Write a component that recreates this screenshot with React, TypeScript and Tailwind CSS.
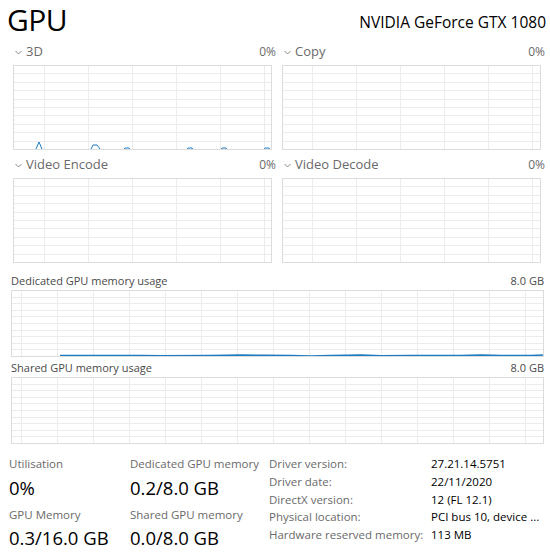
import React from "react";

const BLUE = "#1b7bc4";
const GRID = "#ececec";
const EDGE = "#dcdcdc";

type ChartProps = {
  width: number;
  height: number;
  colStart: number;
  colStep: number;
  rows: number;
  line?: string;
  lineWidth?: number;
};

function Chart({ width, height, colStart, colStep, rows, line, lineWidth = 1 }: ChartProps) {
  const cols: number[] = [];
  for (let x = colStart; x < width - 1; x += colStep) cols.push(Math.round(x) + 0.5);
  const rowLines: number[] = [];
  const step = (height - 1) / rows;
  for (let i = 1; i < rows; i++) rowLines.push(Math.round(i * step) + 0.5);

  return (
    <svg width={width} height={height} className="block overflow-hidden">
      {cols.map((x) => (
        <line key={"c" + x} x1={x} x2={x} y1={0} y2={height} stroke={GRID} />
      ))}
      {rowLines.map((y) => (
        <line key={"r" + y} x1={0} x2={width} y1={y} y2={y} stroke={GRID} />
      ))}
      {line && (
        <polyline points={line} fill="none" stroke={BLUE} strokeWidth={lineWidth} strokeLinejoin="round" />
      )}
      <rect x={0.5} y={0.5} width={width - 1} height={height - 1} fill="none" stroke={EDGE} />
    </svg>
  );
}

function Chevron() {
  return (
    <svg width="7" height="5" viewBox="0 0 7 5" className="block">
      <polyline points="0.5,1 3.5,4 6.5,1" fill="none" stroke="#8a8a8a" strokeWidth="1" />
    </svg>
  );
}

type PanelProps = {
  label: string;
  pct: string;
  line?: string;
  colStart: number;
};

function EnginePanel({ label, pct, line, colStart }: PanelProps) {
  return (
    <div className="flex flex-col w-[263px]">
      <div className="flex items-center justify-between h-[24px] text-[13px] text-[#6a6a6a]">
        <div className="flex items-center gap-[4px] pl-[2px]">
          <Chevron />
          <span>{label}</span>
        </div>
        <span className="text-[12px]">{pct}</span>
      </div>
      <div className="mt-[1px]">
        <Chart width={259} height={85} colStart={colStart} colStep={44} rows={10} line={line} />
      </div>
    </div>
  );
}

const line3d =
  "0,86 22,86 23,84 26,77 29,84 30,86 77,86 78,84 80,80 84,80 87,84 88,86 " +
  "110,86 112,83 116,83 118,86 173,86 175,83 179,83 181,86 207,86 209,83 213,83 215,86 " +
  "250,86 252,83 256,83 258,86";

const lineMem =
  "49,65.5 120,65.5 130,65.5 150,65.7 200,65.5 230,65 250,65.3 280,65.5 " +
  "300,66 320,65.5 350,65 370,65.8 400,65.5 450,65.5 470,65 490,65.5 520,65.5 535,65 545,65";

export default function App() {
  return (
    <div
      className="w-[550px] h-[555px] bg-white overflow-hidden text-black"
      style={{ fontFamily: '"Open Sans", "Noto Sans", sans-serif' }}
    >
      <div className="flex items-end justify-between h-[40px] pl-[7px] pr-[4px]">
        <div className="text-[30px] leading-[40px] tracking-[-0.5px]">GPU</div>
        <div className="text-[15.5px] leading-[20px] mb-[8px]">NVIDIA GeForce GTX 1080</div>
      </div>

      <div className="flex gap-[6px] pl-[13px]">
        <EnginePanel label="3D" pct="0%" line={line3d} colStart={31} />
        <EnginePanel label="Copy" pct="0%" colStart={30} />
      </div>
      <div className="flex gap-[6px] pl-[13px] mt-[3px]">
        <EnginePanel label="Video Encode" pct="0%" colStart={31} />
        <EnginePanel label="Video Decode" pct="0%" colStart={30} />
      </div>

      <div className="pl-[11px] pr-[6px] mt-[9px] text-[11px] text-[#4a4a4a]">
        <div className="flex items-center justify-between h-[18px]">
          <span>Dedicated GPU memory usage</span>
          <span>8.0 GB</span>
        </div>
        <Chart width={533} height={67} colStart={9.7} colStep={36} rows={10} line={lineMem} lineWidth={1.6} />
        <div className="flex items-center justify-between h-[18px] mt-[2px]">
          <span>Shared GPU memory usage</span>
          <span>8.0 GB</span>
        </div>
        <Chart width={533} height={67} colStart={9.7} colStep={36} rows={10} />
      </div>

      <div className="flex mt-[11px] pl-[9px]">
        <div className="flex flex-col w-[121px]">
          <div className="h-[18px] leading-[18px] text-[11.5px] text-[#6a6a6a]">Utilisation</div>
          <div className="h-[30px] leading-[30px] text-[18.5px]">0%</div>
          <div className="h-[18px] leading-[18px] mt-[3px] text-[11.5px] text-[#6a6a6a]">GPU Memory</div>
          <div className="h-[28px] leading-[28px] text-[18.5px]">0.3/16.0 GB</div>
        </div>
        <div className="flex flex-col w-[139px]">
          <div className="h-[18px] leading-[18px] text-[11.5px] text-[#6a6a6a]">Dedicated GPU memory</div>
          <div className="h-[30px] leading-[30px] text-[18.5px]">0.2/8.0 GB</div>
          <div className="h-[18px] leading-[18px] mt-[3px] text-[11.5px] text-[#6a6a6a]">Shared GPU memory</div>
          <div className="h-[28px] leading-[28px] text-[18.5px]">0.0/8.0 GB</div>
        </div>
        <div className="grid grid-cols-[162px_1fr] auto-rows-[17.75px] text-[11.5px] leading-[17.75px]">
          <span className="text-[#6a6a6a]">Driver version:</span>
          <span>27.21.14.5751</span>
          <span className="text-[#6a6a6a]">Driver date:</span>
          <span>22/11/2020</span>
          <span className="text-[#6a6a6a]">DirectX version:</span>
          <span>12 (FL 12.1)</span>
          <span className="text-[#6a6a6a]">Physical location:</span>
          <span>PCI bus 10, device ...</span>
          <span className="text-[#6a6a6a]">Hardware reserved memory:</span>
          <span>113 MB</span>
        </div>
      </div>
    </div>
  );
}
